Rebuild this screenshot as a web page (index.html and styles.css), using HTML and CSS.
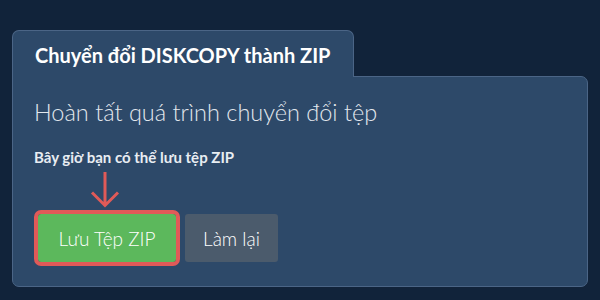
FILE: index.html
```html
<!DOCTYPE html>
<html>
<head>
    <title>Chuyển đổi DISKCOPY thành ZIP</title>
    <link rel="stylesheet" href="styles.css">
</head>
<body>

<div class="panel">
    <div class="tab">Chuyển đổi DISKCOPY thành ZIP</div>
    <div class="card">
        <h1>Hoàn tất quá trình chuyển đổi tệp</h1>
        <p class="hint">Bây giờ bạn có thể lưu tệp ZIP</p>
        <div class="arrow">
            <svg width="30" height="37" viewBox="0 0 30 37">
                <path d="M15 0 V34 M2 20.5 L15 33.5 L28 20.5" fill="none" stroke="#e05a58" stroke-width="3"/>
            </svg>
        </div>
        <div class="actions">
            <button class="btn saveBtn">Lưu Tệp ZIP</button>
            <button class="btn resetBtn">Làm lại</button>
        </div>
    </div>
</div>

</body>
</html>
```

FILE: styles.css
```css
body {
    font-family: Lato, "Noto Sans", sans-serif;
    background-color: #11233a;
    margin: 0;
    padding: 30px 12px 0 12px;
}
.panel {
    width: 576px;
}
.tab {
    position: relative;
    z-index: 1;
    display: inline-block;
    height: 44px;
    line-height: 44px;
    padding: 2px 22px 0 22px;
    background-color: #2d4969;
    border: 1px solid #4b6586;
    border-bottom: none;
    border-radius: 7px 7px 0 0;
    color: #ffffff;
    font-size: 20px;
    font-weight: bold;
    margin-bottom: -1px;
    vertical-align: top;
}
.card {
    background-color: #2d4969;
    border: 1px solid #4b6586;
    border-radius: 0 7px 7px 7px;
    padding: 20px 22px 0 21px;
    box-sizing: border-box;
    height: 211px;
}
h1 {
    color: #e2e7ed;
    font-size: 23.5px;
    font-weight: 300;
    margin: 0;
    line-height: 30px;
}
.hint {
    color: #e8edf2;
    font-size: 15px;
    font-weight: bold;
    margin: 21px 0 0 0;
    line-height: 18px;
}
.arrow {
    margin: 6px 0 0 56px;
    height: 37px;
}
.arrow svg {
    display: block;
}
.actions {
    display: flex;
    align-items: center;
    gap: 9px;
    margin-top: 5px;
    padding-left: 4px;
}
.btn {
    font-family: Lato, "Noto Sans", sans-serif;
    font-size: 19px;
    font-weight: 300;
    color: #ffffff;
    height: 48px;
    padding: 0;
    border: none;
    border-radius: 3px;
    cursor: pointer;
}
.saveBtn {
    background-color: #5cb85c;
    outline: 4px solid #e05a58;
    width: 138px;
}
.resetBtn {
    background-color: #4b5b6c;
    width: 93px;
}
```
